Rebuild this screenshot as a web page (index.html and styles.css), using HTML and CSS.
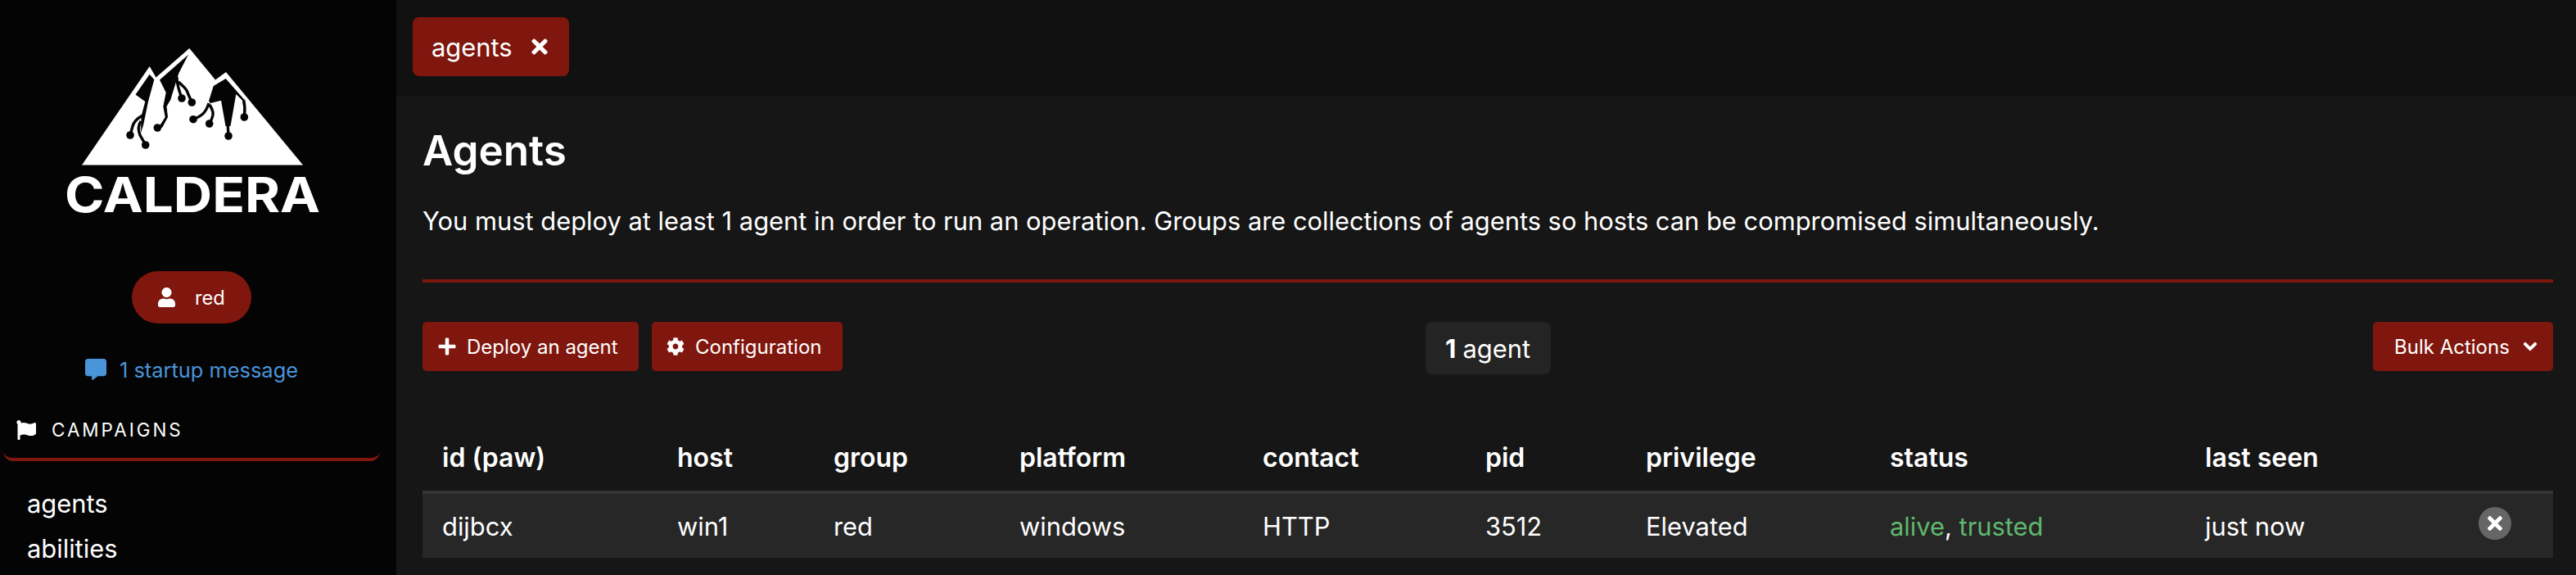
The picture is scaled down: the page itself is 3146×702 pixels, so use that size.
FILE: index.html
```html
<!DOCTYPE html>
<html lang="en">
<head>
<meta charset="utf-8">
<title>Caldera - Agents</title>
<link rel="stylesheet" href="styles.css">
</head>
<body>
<div class="app">
  <aside class="sidebar">
    <svg class="logo" viewBox="60 50 340 235" aria-label="Caldera logo">
      <path class="logo-white" d="M100 201.5 182.7 81 190.5 94.5 231.3 59 263 97.5 276 88 370 201.5Z"/>
      <path class="logo-black" d="M182.7 90.7 165.5 115.5 177.3 124 172.5 142 172 162 175 153 181 124 188.3 97.3Z"/>
      <path class="logo-black" d="M230 66.7 195 97.5 202.7 113 199.3 130 201.7 143 194 155 198 156 205 143 203.5 130 208.3 121.7 215 100 218.5 89Z"/>
      <path class="logo-black" d="M275.7 96 260.7 105 255 123.3 256.7 126 270 122.7 275.5 154 281.5 154 288.3 115 299 125.5 299 122.5Z"/>
      <path class="logo-root" d="M174 141C165 146 163 150 162 154L159 165"/>
      <path class="logo-root" d="M172 148C168 154 169 160 171 165L177.7 176.7"/>
      <path class="logo-root" d="M216 94C216 105 219 110 222 120"/>
      <path class="logo-root" d="M218 100C224 106 228 108 229 113L234.3 125"/>
      <path class="logo-root" d="M255 126C252 136 248 141 236 145.7"/>
      <path class="logo-root" d="M256 128C261 136 262 140 255.7 151"/>
      <path class="logo-root" d="M278 150 279 166"/>
      <path class="logo-root" d="M297.5 122C300 132 299 136 298.3 142.7"/>
      <circle class="logo-black" cx="159" cy="165" r="4.8"/>
      <circle class="logo-black" cx="177.7" cy="177" r="4.8"/>
      <circle class="logo-black" cx="192.3" cy="156" r="4.8"/>
      <circle class="logo-black" cx="222" cy="120" r="4.8"/>
      <circle class="logo-black" cx="234.3" cy="125" r="4.8"/>
      <circle class="logo-black" cx="236" cy="145.7" r="4.8"/>
      <circle class="logo-black" cx="255.7" cy="151" r="4.8"/>
      <circle class="logo-black" cx="279" cy="166" r="4.8"/>
      <circle class="logo-black" cx="298.3" cy="143" r="4.8"/>
      <text class="logo-text" x="79" y="259" textLength="312" lengthAdjust="spacingAndGlyphs">CALDERA</text>
    </svg>
    <div class="pill-row">
      <div class="user-pill">
        <svg class="icon-user" viewBox="0 0 448 512"><path d="M224 256c70.7 0 128-57.3 128-128S294.7 0 224 0 96 57.3 96 128s57.3 128 128 128zm89.6 32h-16.7c-22.2 10.2-46.9 16-72.9 16s-50.6-5.8-72.9-16h-16.7C60.2 288 0 348.2 0 422.4V464c0 26.5 21.5 48 48 48h352c26.5 0 48-21.5 48-48v-41.6c0-74.2-60.2-134.4-134.4-134.4z"/></svg>
        <span>red</span>
      </div>
    </div>
    <div class="message">
      <svg class="icon-comment" viewBox="0 0 512 512"><path d="M448 0H64C28.7 0 0 28.7 0 64v288c0 35.3 28.7 64 64 64h96v84c0 9.8 11.2 15.5 19.1 9.7L304 416h144c35.3 0 64-28.7 64-64V64c0-35.3-28.7-64-64-64z"/></svg>
      <span>1 startup message</span>
    </div>
    <div class="section">
      <svg class="icon-flag" viewBox="0 0 512 512"><path d="M349.565 98.783C295.978 98.783 251.721 64 184.348 64c-24.955 0-47.309 4.384-68.045 12.013a55.947 55.947 0 0 0 3.586-23.562C118.117 24.015 94.806 1.206 66.338.048 34.345-1.254 8 24.296 8 56c0 19.026 9.497 35.825 24 45.945V488c0 13.255 10.745 24 24 24h16c13.255 0 24-10.745 24-24v-94.4c28.311-12.064 63.582-22.122 114.435-22.122 53.588 0 97.844 34.783 165.217 34.783 48.169 0 86.667-16.294 122.505-40.858C506.84 359.452 512 349.571 512 339.045v-243.1c0-23.393-24.269-38.87-45.485-29.016-34.338 15.948-76.454 31.854-116.95 31.854z"/></svg>
      <span>CAMPAIGNS</span>
    </div>
    <nav class="menu">
      <a>agents</a>
      <a>abilities</a>
    </nav>
  </aside>
  <main class="main">
    <div class="tabs">
      <div class="tab">
        <span>agents</span>
        <svg class="icon-tab-x" viewBox="0 0 352 512"><path d="M242.72 256l100.07-100.07c12.28-12.28 12.28-32.19 0-44.48l-22.24-22.24c-12.28-12.28-32.19-12.28-44.48 0L176 189.28 75.93 89.21c-12.28-12.28-32.19-12.28-44.48 0L9.21 111.45c-12.28 12.28-12.28 32.19 0 44.48L109.28 256 9.21 356.07c-12.28 12.28-12.28 32.19 0 44.48l22.24 22.24c12.28 12.28 32.2 12.28 44.48 0L176 322.72l100.07 100.07c12.28 12.28 32.2 12.28 44.48 0l22.24-22.24c12.28-12.28 12.28-32.19 0-44.48L242.72 256z"/></svg>
      </div>
    </div>
    <section class="content">
      <h1 class="title">Agents</h1>
      <p class="intro">You must deploy at least 1 agent in order to run an operation. Groups are collections of agents so hosts can be compromised simultaneously.</p>
      <hr class="rule">
      <div class="toolbar">
        <div class="toolbar-left">
          <button class="btn btn-deploy">
            <svg class="icon-btn" viewBox="0 0 448 512"><path d="M416 208H272V64c0-17.67-14.33-32-32-32h-32c-17.67 0-32 14.33-32 32v144H32c-17.67 0-32 14.33-32 32v32c0 17.67 14.33 32 32 32h144v144c0 17.67 14.33 32 32 32h32c17.67 0 32-14.33 32-32V304h144c17.67 0 32-14.33 32-32v-32c0-17.67-14.33-32-32-32z"/></svg>
            <span>Deploy an agent</span>
          </button>
          <button class="btn btn-config">
            <svg class="icon-btn" viewBox="0 0 512 512"><path d="M487.4 315.7l-42.6-24.6c4.3-23.2 4.3-47 0-70.2l42.6-24.6c4.9-2.8 7.1-8.6 5.5-14-11.1-35.6-30-67.8-54.7-94.6-3.8-4.1-10-5.1-14.8-2.3L380.8 110c-17.9-15.4-38.5-27.3-60.8-35.1V25.8c0-5.6-3.9-10.5-9.4-11.7-36.7-8.2-74.3-7.8-109.2 0-5.5 1.2-9.4 6.1-9.4 11.7V75c-22.2 7.9-42.8 19.8-60.8 35.1L88.7 85.5c-4.9-2.8-11-1.9-14.8 2.3-24.7 26.7-43.6 58.9-54.7 94.6-1.7 5.4.6 11.2 5.5 14L67.3 221c-4.3 23.2-4.3 47 0 70.2l-42.6 24.6c-4.9 2.8-7.1 8.6-5.5 14 11.1 35.6 30 67.8 54.7 94.6 3.8 4.1 10 5.1 14.8 2.3l42.6-24.6c17.9 15.4 38.5 27.3 60.8 35.1v49.2c0 5.6 3.9 10.5 9.4 11.7 36.7 8.2 74.3 7.8 109.2 0 5.5-1.2 9.4-6.1 9.4-11.7v-49.2c22.2-7.9 42.8-19.8 60.8-35.1l42.6 24.6c4.9 2.8 11 1.9 14.8-2.3 24.7-26.7 43.6-58.9 54.7-94.6 1.5-5.5-.7-11.3-5.6-14.1zM256 336c-44.1 0-80-35.9-80-80s35.9-80 80-80 80 35.9 80 80-35.9 80-80 80z"/></svg>
            <span>Configuration</span>
          </button>
        </div>
        <div class="count"><strong>1</strong> agent</div>
        <div class="toolbar-right">
          <button class="btn btn-bulk">
            <span>Bulk Actions</span>
            <svg class="icon-chevron" viewBox="0 0 448 512"><path d="M207.029 381.476L12.686 187.132c-9.373-9.373-9.373-24.569 0-33.941l22.667-22.667c9.357-9.357 24.522-9.375 33.901-.04L224 284.505l154.745-154.021c9.379-9.335 24.544-9.317 33.901.04l22.667 22.667c9.373 9.373 9.373 24.569 0 33.941L240.971 381.476c-9.373 9.372-24.569 9.372-33.942 0z"/></svg>
          </button>
        </div>
      </div>
      <table class="agents">
        <colgroup>
          <col class="c-paw"><col class="c-host"><col class="c-group"><col class="c-platform"><col class="c-contact"><col class="c-pid"><col class="c-priv"><col class="c-status"><col class="c-seen"><col>
        </colgroup>
        <thead>
          <tr><th>id (paw)</th><th>host</th><th>group</th><th>platform</th><th>contact</th><th>pid</th><th>privilege</th><th>status</th><th>last seen</th><th></th></tr>
        </thead>
        <tbody>
          <tr>
            <td>dijbcx</td><td>win1</td><td>red</td><td>windows</td><td>HTTP</td><td>3512</td><td>Elevated</td>
            <td><span class="ok">alive</span>, <span class="ok">trusted</span></td>
            <td>just now</td>
            <td class="cell-del"><span class="del"><svg class="icon-del" viewBox="0 0 352 512"><path d="M242.72 256l100.07-100.07c12.28-12.28 12.28-32.19 0-44.48l-22.24-22.24c-12.28-12.28-32.19-12.28-44.48 0L176 189.28 75.93 89.21c-12.28-12.28-32.19-12.28-44.48 0L9.21 111.45c-12.28 12.28-12.28 32.19 0 44.48L109.28 256 9.21 356.07c-12.28 12.28-12.28 32.19 0 44.48l22.24 22.24c12.28 12.28 32.2 12.28 44.48 0L176 322.72l100.07 100.07c12.28 12.28 32.2 12.28 44.48 0l22.24-22.24c12.28-12.28 12.28-32.19 0-44.48L242.72 256z"/></svg></span></td>
          </tr>
        </tbody>
      </table>
    </section>
  </main>
</div>
</body>
</html>
```
FILE: styles.css
```css
* { box-sizing: border-box; }
html, body { margin: 0; height: 702px; overflow: hidden; background: #161616; }
body { font-family: Inter, "Liberation Sans", sans-serif; color: #fff; font-size: 30.85px; }
svg { fill: currentColor; display: block; flex: none; }

.app { display: flex; height: 702px; }

.sidebar { width: 484px; flex: none; background: #040404; padding-top: 50px; overflow: hidden; }
.logo { width: 340px; height: 235px; margin-left: 60px; }
.logo-white { fill: #fff; }
.logo-black { fill: #040404; }
.logo-root { fill: none; stroke: #040404; stroke-width: 3.4; }
.logo-text { font-family: Inter, sans-serif; font-weight: 700; font-size: 59px; fill: #fff; }

.pill-row { display: flex; margin-top: 46px; padding-left: 161px; }
.user-pill { width: 146px; height: 64px; border-radius: 32px; background: #7f170e; display: flex; align-items: center; padding-left: 32px; gap: 24px; font-size: 23.6px; }
.icon-user { width: 21px; height: 24px; }

.message { display: flex; align-items: center; margin-top: 41px; padding-left: 104px; gap: 16px; color: #4a94d9; font-size: 25.4px; height: 30px; }
.icon-comment { width: 26px; height: 26px; }

.section { height: 73px; margin: 24px 20px 0 4px; padding: 0 0 0 16px; display: flex; align-items: center; gap: 19px; font-size: 22.4px; letter-spacing: 3px; border-bottom: 4px solid #7f170e; border-radius: 0 0 12px 12px; }
.icon-flag { width: 24px; height: 24px; }

.menu { display: flex; flex-direction: column; margin-top: 24px; padding-left: 33px; }
.menu a { height: 55px; line-height: 55px; }

.main { flex: 1; min-width: 0; display: flex; flex-direction: column; }
.tabs { height: 117px; background: #111; padding: 21px 0 0 20px; flex: none; }
.tab { width: 191px; height: 72px; border-radius: 8px; background: #7f170e; display: flex; align-items: center; padding-left: 23px; gap: 23px; }
.icon-tab-x { width: 20px; height: 28px; }

.content { flex: 1; padding: 0 28px 0 32px; }
.title { margin: 0; font-size: 51.2px; font-weight: 600; line-height: 64px; padding-top: 34px; }
.intro { margin: 0; line-height: 44px; padding-top: 33px; }
.rule { height: 4px; border: 0; margin: 49px 0 0; background: #7f170e; }

.toolbar { display: grid; grid-template-columns: 1fr auto 1fr; align-items: start; margin-top: 48px; }
.toolbar-left { display: flex; gap: 16px; }
.toolbar-right { display: flex; justify-content: flex-end; }
.btn { height: 60px; border: 0; border-radius: 5px; background: #7f170e; color: #fff; font: inherit; font-size: 24px; display: flex; align-items: center; padding: 0; }
.btn-deploy { width: 264px; padding-left: 19px; gap: 13px; }
.btn-config { width: 233px; padding-left: 18px; gap: 13px; }
.btn-bulk { width: 220px; padding-left: 26px; gap: 17px; }
.icon-btn { width: 22px; height: 24px; }
.icon-chevron { width: 16px; height: 18px; stroke: currentColor; stroke-width: 30; }
.count { width: 153px; height: 64px; border-radius: 8px; background: #242424; display: flex; align-items: center; justify-content: center; gap: 0.27em; }
.count strong { font-weight: 700; }

.agents { width: 100%; table-layout: fixed; border-collapse: collapse; }
.c-paw { width: 287px; }
.c-host { width: 191px; }
.c-group { width: 227px; }
.c-platform { width: 297px; }
.c-contact { width: 272px; }
.c-pid { width: 196px; }
.c-priv { width: 298px; }
.c-status { width: 385px; }
.c-seen { width: 330px; }
.agents th, .agents td { text-align: left; padding: 0 0 0 24px; }
.agents th { height: 144px; font-size: 32px; font-weight: 600; vertical-align: bottom; padding-bottom: 21px; border-bottom: 4px solid #363636; }
.agents td { height: 80px; background: #272727; }
.ok { color: #5fb86e; }
.agents .cell-del { padding-left: 28px; }
.del { width: 40px; height: 40px; border-radius: 50%; background: #666; display: flex; align-items: center; justify-content: center; margin-top: -6px; }
.icon-del { width: 18px; height: 26px; }
```
